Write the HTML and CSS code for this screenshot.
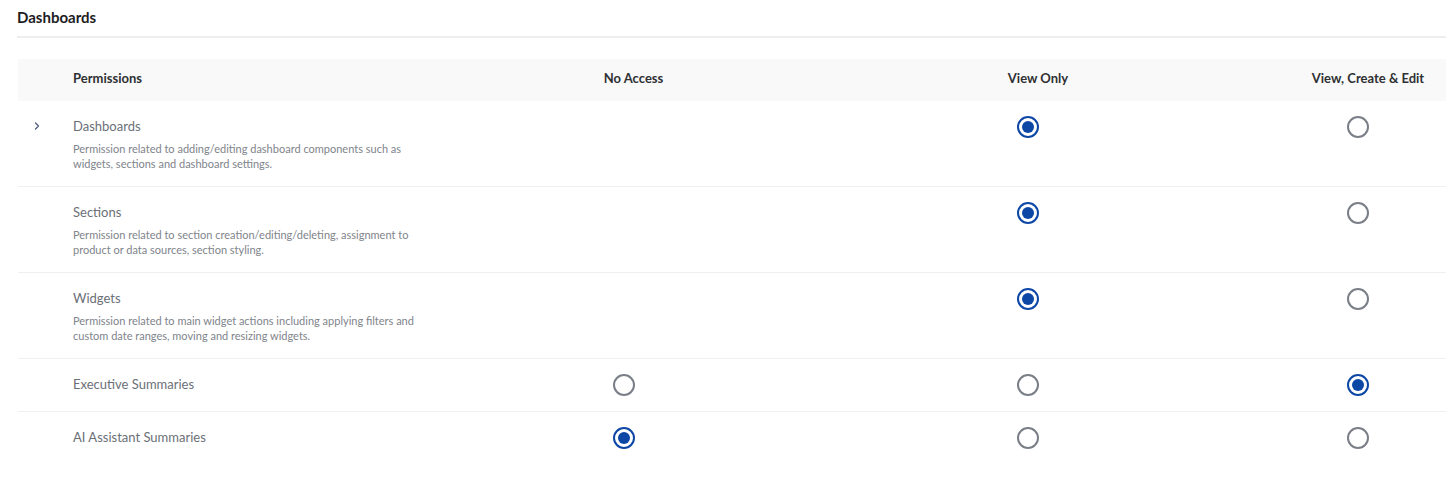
FILE: index.html
```html
<!DOCTYPE html>
<html>
<head>
    <title>Dashboards Permissions</title>
    <link rel="stylesheet" href="styles.css">
</head>
<body>
    <div class="page">
        <h2 class="page-title">Dashboards</h2>

        <div class="perm-table">
            <div class="perm-row perm-head">
                <div class="cell"></div>
                <div class="cell">Permissions</div>
                <div class="cell center">No Access</div>
                <div class="cell center">View Only</div>
                <div class="cell center">View, Create &amp; Edit</div>
            </div>

            <div class="perm-row">
                <div class="cell toggle">
                    <svg width="6" height="8" viewBox="0 0 6 8"><path d="M1.5 1 L4.5 4 L1.5 7" fill="none" stroke="#4f5d78" stroke-width="1.3" stroke-linecap="round" stroke-linejoin="round"/></svg>
                </div>
                <div class="cell">
                    <div class="perm-name">Dashboards</div>
                    <div class="perm-desc">Permission related to adding/editing dashboard components such as widgets, sections and dashboard settings.</div>
                </div>
                <div class="cell radio-cell"></div>
                <div class="cell radio-cell"><span class="radio checked"></span></div>
                <div class="cell radio-cell"><span class="radio"></span></div>
            </div>

            <div class="perm-row">
                <div class="cell"></div>
                <div class="cell">
                    <div class="perm-name">Sections</div>
                    <div class="perm-desc">Permission related to section creation/editing/deleting, assignment to product or data sources, section styling.</div>
                </div>
                <div class="cell radio-cell"></div>
                <div class="cell radio-cell"><span class="radio checked"></span></div>
                <div class="cell radio-cell"><span class="radio"></span></div>
            </div>

            <div class="perm-row">
                <div class="cell"></div>
                <div class="cell">
                    <div class="perm-name">Widgets</div>
                    <div class="perm-desc">Permission related to main widget actions including applying filters and custom date ranges, moving and resizing widgets.</div>
                </div>
                <div class="cell radio-cell"></div>
                <div class="cell radio-cell"><span class="radio checked"></span></div>
                <div class="cell radio-cell"><span class="radio"></span></div>
            </div>

            <div class="perm-row">
                <div class="cell"></div>
                <div class="cell">
                    <div class="perm-name">Executive Summaries</div>
                </div>
                <div class="cell radio-cell"><span class="radio"></span></div>
                <div class="cell radio-cell"><span class="radio"></span></div>
                <div class="cell radio-cell"><span class="radio checked"></span></div>
            </div>

            <div class="perm-row last">
                <div class="cell"></div>
                <div class="cell">
                    <div class="perm-name">AI Assistant Summaries</div>
                </div>
                <div class="cell radio-cell"><span class="radio checked"></span></div>
                <div class="cell radio-cell"><span class="radio"></span></div>
                <div class="cell radio-cell"><span class="radio"></span></div>
            </div>
        </div>
    </div>
</body>
</html>
```

FILE: styles.css
```css
body {
    margin: 0;
    font-family: Lato, "Noto Sans", sans-serif;
    background: #fff;
}
.page {
    padding-left: 17px;
}
.page-title {
    margin: 0;
    padding: 7px 0 9px;
    font-size: 15px;
    line-height: 20px;
    font-weight: 700;
    color: #1d1d1f;
    border-bottom: 2px solid #eeeeee;
}
.perm-table {
    margin-top: 21px;
    margin-left: 1px;
}
.perm-row {
    display: grid;
    grid-template-columns: 55px 408px 305px 504px 156px;
    border-bottom: 1px solid #f0f0f0;
    padding: 15px 0;
}
.perm-row.last {
    border-bottom: none;
}
.perm-head {
    background: #f9f9f9;
    padding: 0 0 4px;
    height: 42px;
    box-sizing: border-box;
    align-items: center;
    border-bottom: none;
    font-size: 13px;
    font-weight: 700;
    color: #2f3033;
}
.center {
    text-align: center;
}
.toggle {
    display: flex;
    align-items: center;
    justify-content: flex-start;
    padding-left: 16px;
    height: 20px;
}
.perm-name {
    font-size: 13px;
    line-height: 20px;
    color: #6b6f77;
}
.perm-desc {
    margin-top: 5px;
    max-width: 350px;
    font-size: 11px;
    line-height: 15px;
    color: #80848b;
}
.radio-cell {
    display: flex;
    justify-content: center;
    align-items: center;
    height: 22px;
    padding-right: 20px;
}
.radio {
    box-sizing: border-box;
    width: 22px;
    height: 22px;
    border-radius: 50%;
    border: 2px solid #7a7f87;
    display: flex;
    align-items: center;
    justify-content: center;
}
.radio.checked {
    border-color: #0d47a6;
}
.radio.checked::after {
    content: "";
    width: 12px;
    height: 12px;
    border-radius: 50%;
    background: #0d47a6;
}
```
